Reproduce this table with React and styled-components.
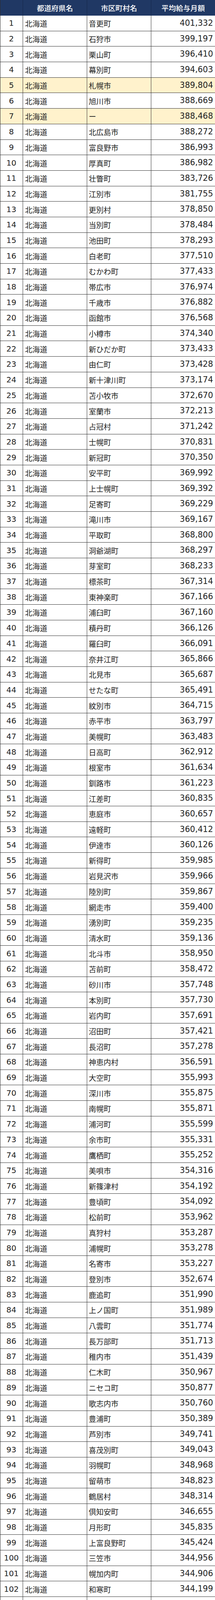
import React from "react";
import styled, { createGlobalStyle } from "styled-components";

const Global = createGlobalStyle`
  html, body { margin: 0; padding: 0; background: #ffffff; }
  * { box-sizing: border-box; }
`;

const RAW = `1 音更町 401,332
2 石狩市 399,197
3 栗山町 396,410
4 幕別町 394,603
5 札幌市 389,804
6 旭川市 388,669
7 ー 388,468
8 北広島市 388,272
9 富良野市 386,993
10 厚真町 386,982
11 壮瞥町 383,726
12 江別市 381,755
13 更別村 378,850
14 当別町 378,484
15 池田町 378,293
16 白老町 377,510
17 むかわ町 377,433
18 帯広市 376,974
19 千歳市 376,882
20 函館市 376,568
21 小樽市 374,340
22 新ひだか町 373,433
23 由仁町 373,428
24 新十津川町 373,174
25 苫小牧市 372,670
26 室蘭市 372,213
27 占冠村 371,242
28 士幌町 370,831
29 新冠町 370,350
30 安平町 369,992
31 上士幌町 369,392
32 足寄町 369,229
33 滝川市 369,167
34 平取町 368,800
35 洞爺湖町 368,297
36 芽室町 368,233
37 標茶町 367,314
38 東神楽町 367,166
39 浦臼町 367,160
40 積丹町 366,126
41 羅臼町 366,091
42 奈井江町 365,866
43 北見市 365,687
44 せたな町 365,491
45 紋別市 364,715
46 赤平市 363,797
47 美幌町 363,483
48 日高町 362,912
49 根室市 361,634
50 釧路市 361,223
51 江差町 360,835
52 恵庭市 360,657
53 遠軽町 360,412
54 伊達市 360,126
55 新得町 359,985
56 岩見沢市 359,966
57 陸別町 359,867
58 網走市 359,400
59 湧別町 359,235
60 清水町 359,136
61 北斗市 358,950
62 苫前町 358,472
63 砂川市 357,748
64 本別町 357,730
65 岩内町 357,691
66 沼田町 357,421
67 長沼町 357,278
68 神恵内村 356,591
69 大空町 355,993
70 深川市 355,875
71 南幌町 355,871
72 浦河町 355,599
73 余市町 355,331
74 鷹栖町 355,252
75 美唄市 354,316
76 新篠津村 354,192
77 豊頃町 354,092
78 松前町 353,962
79 真狩村 353,287
80 浦幌町 353,278
81 名寄市 353,227
82 登別市 352,674
83 鹿追町 351,990
84 上ノ国町 351,989
85 八雲町 351,774
86 長万部町 351,713
87 稚内市 351,439
88 仁木町 350,967
89 ニセコ町 350,877
90 歌志内市 350,760
91 豊浦町 350,389
92 芦別市 349,741
93 喜茂別町 349,043
94 羽幌町 348,968
95 留萌市 348,823
96 鶴居村 348,314
97 倶知安町 346,655
98 月形町 345,835
99 上富良野町 345,424
100 三笠市 344,956
101 幌加内町 344,906
102 和寒町 344,199
103 愛別町 344,152
104 妹背牛町 343,626
105 南富良野町 343,451
106 清里町 343,215
107 上川町 343,084
108 白糠町 342,435
109 美瑛町 342,209
110 寿都町 342,089
111 夕張市 341,482
112 厚沢部町 341,466
113 下川町 341,409
114 比布町 341,381
115 蘭越町 341,352
116 秩父別町 340,781
117 滝上町 340,663
118 枝幸町 340,492
119 泊村 339,357
120 弟子屈町 339,197
121 大樹町 338,859
122 黒松内町 338,633
123 釧路町 337,789
124 京極町 337,591
125 雨竜町 337,567
126 津別町 337,538
127 東川町 337,459
128 厚岸町 337,006
129 剣淵町 336,932
130 今金町 336,559
131 島牧村 336,125
132 猿払村 336,125
133 中頓別町 335,825
134 赤井川村 335,464
135 森町 334,950
136 中富良野町 334,507
137 士別市 334,470
138 別海町 333,897
139 小平町 333,736
140 北竜町 333,661
141 中札内村 333,612
142 斜里町 332,996
143 当麻町 332,215
144 幌延町 330,940
145 七飯町 330,881
146 小清水町 330,783
147 えりも町 330,578
148 置戸町 329,625
149 佐呂間町 329,254
150 訓子府町 329,059
151 遠別町 328,709
152 留寿都村 328,546
153 礼文町 328,507
154 古平町 328,399
155 標津町 328,363
156 浜中町 327,982
157 美深町 327,600
158 中標津町 326,581
159 雄武町 326,527
160 初山別村 325,594
161 広尾町 324,853
162 豊富町 323,716
163 興部町 322,254
164 木古内町 320,529
165 共和町 320,211
166 中川町 320,168
167 福島町 319,980
168 天塩町 319,293
169 利尻町 317,956
170 乙部町 317,821
171 上砂川町 315,974
172 奥尻町 315,685
173 増毛町 314,646
174 鹿部町 314,553
175 様似町 313,361
176 西興部村 309,223
177 音威子府村 308,872
178 浜頓別町 308,631
177 知内町 307,757
178 利尻富士町 305,661`;

const ROWS = RAW.split("\n").map((line, i) => {
  const [rank, city, amount] = line.trim().split(" ");
  return { key: i, rank, city, amount };
});

const HIGHLIGHT = new Set([4, 6]);

const CJK = `"Noto Sans CJK JP", "Noto Sans", sans-serif`;
const NUM = `"DejaVu Sans", "Noto Sans CJK JP", sans-serif`;

const Table = styled.div`
  width: 550px;
  display: grid;
  grid-template-columns: 58px 164px 164px 164px;
  grid-template-rows: 40px;
  grid-auto-rows: 39.7px;
  border-left: 1px solid #2e2e2e;
`;

const HeadCell = styled.div`
  display: flex;
  align-items: center;
  justify-content: center;
  background: #203864;
  border-right: 1px solid #16284a;
  color: #ffffff;
  font-family: ${CJK};
  font-size: 18.5px;
  font-weight: 500;
  line-height: 1;
  padding-top: 1px;
`;

const Cell = styled.div`
  display: flex;
  align-items: center;
  background: ${(p) => (p.$hl ? "#fff2cc" : "#ffffff")};
  border-right: 1px solid #333333;
  border-bottom: 1px solid #333333;
  color: #222222;
  line-height: 1;
  white-space: nowrap;
  overflow: hidden;
`;

const RankCell = styled(Cell)`
  justify-content: center;
  font-family: ${NUM};
  font-size: 20px;
  padding-right: 1px;
`;

const TextCell = styled(Cell)`
  justify-content: flex-start;
  padding-left: ${(p) => p.$pad}px;
  font-family: ${CJK};
  font-size: 19px;
  padding-top: 1px;
`;

const NumCell = styled(Cell)`
  justify-content: flex-end;
  padding-right: 5px;
  font-family: ${NUM};
  font-size: 20.6px;
`;

export default function App() {
  return (
    <>
      <Global />
      <Table>
        <HeadCell />
        <HeadCell>都道府県名</HeadCell>
        <HeadCell>市区町村名</HeadCell>
        <HeadCell>平均給与月額</HeadCell>
        {ROWS.map((r) => {
          const hl = HIGHLIGHT.has(r.key);
          return (
            <React.Fragment key={r.key}>
              <RankCell $hl={hl}>{r.rank}</RankCell>
              <TextCell $hl={hl} $pad={5}>北海道</TextCell>
              <TextCell $hl={hl} $pad={4}>{r.city}</TextCell>
              <NumCell $hl={hl}>{r.amount}</NumCell>
            </React.Fragment>
          );
        })}
      </Table>
    </>
  );
}
